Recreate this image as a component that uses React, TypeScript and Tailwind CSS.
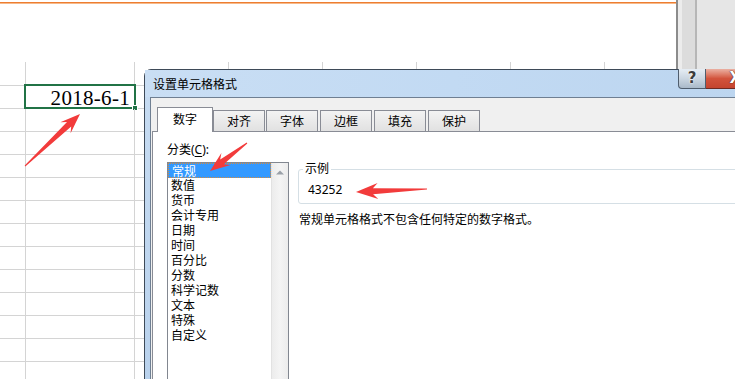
import React from "react";

const colW = [26, 109, 94, 94, 94, 94, 94, 71];
const rowCount = 14;

function arrowPts(
  x1: number, y1: number, x2: number, y2: number,
  headLen: number, headW: number, shaftW: number, tailW: number
) {
  const dx = x2 - x1, dy = y2 - y1;
  const L = Math.hypot(dx, dy);
  const ux = dx / L, uy = dy / L;
  const nx = -uy, ny = ux;
  const bx = x2 - ux * headLen, by = y2 - uy * headLen;
  const jx = bx + ux * 3, jy = by + uy * 3;
  const pts = [
    [x1 + (nx * tailW) / 2, y1 + (ny * tailW) / 2],
    [jx + (nx * shaftW) / 2, jy + (ny * shaftW) / 2],
    [bx - ux * 2 + (nx * headW) / 2, by - uy * 2 + (ny * headW) / 2],
    [x2, y2],
    [bx - ux * 2 - (nx * headW) / 2, by - uy * 2 - (ny * headW) / 2],
    [jx - (nx * shaftW) / 2, jy - (ny * shaftW) / 2],
    [x1 - (nx * tailW) / 2, y1 - (ny * tailW) / 2],
  ];
  return pts.map((p) => `${p[0].toFixed(1)},${p[1].toFixed(1)}`).join(" ");
}

const items = ["常规", "数值", "货币", "会计专用", "日期", "时间", "百分比", "分数", "科学记数", "文本", "特殊", "自定义"];

function Sheet() {
  return (
    <div className="w-[676px] h-[379px] flex flex-col bg-white">
      <div className="h-[62px] shrink-0 pt-[2px]">
        <div className="h-[1px] bg-[#ed7d31]" />
        <div className="h-[1px] bg-[#f6b98a]" />
      </div>
      {Array.from({ length: rowCount }).map((_, r) => (
        <div key={r} className={`flex shrink-0 border-b border-[#d4d4d4] ${r === 0 ? "h-[24px]" : "h-[23px]"}`}>
          {colW.map((w, c) => (
            <div
              key={c}
              style={{ width: w }}
              className={`shrink-0 h-full relative ${c < colW.length - 1 ? "border-r border-[#d4d4d4]" : ""}`}
            >
              {r === 1 && c === 1 && (
                <>
                  <div className="h-full pr-[4px] pt-[1px] text-right text-[21px] leading-[22px] tracking-[0.3px] font-['Liberation_Serif',serif] text-black">
                    2018-6-1
                  </div>
                  <div className="absolute -left-[2px] -top-[2px] w-[112px] h-[25px] border-2 border-[#217346]" />
                  <div className="absolute left-[106px] top-[19px] w-[6px] h-[6px] bg-[#217346] border border-white" />
                </>
              )}
            </div>
          ))}
        </div>
      ))}
    </div>
  );
}

function Strip() {
  return (
    <div className="w-[59px] h-[379px] flex border-l-2 border-[#8c8c8c]">
      <div className="w-[4px] bg-[#ececec]" />
      <div className="w-[15px] bg-[#dcdcdc] border-r-2 border-[#b6b6b6]" />
      <div className="flex-1 bg-[#e6e6e6]" />
    </div>
  );
}

function Tab({ label, selected, ml }: { label: string; selected?: boolean; ml?: string }) {
  if (selected) {
    return (
      <div className="relative z-10 -mb-[1px] w-[56px] h-[25px] bg-white border border-b-0 border-[#898c95] flex items-center justify-center text-[12px] leading-[14px] pb-[1px]">
        {label}
      </div>
    );
  }
  return (
    <div className={`w-[52px] h-[21px] border border-b-0 border-[#898c95] bg-gradient-to-b from-[#f3f3f3] to-[#e1e1e1] flex items-center justify-center text-[12px] leading-[14px] pt-[1px] ${ml ?? ""}`}>
      {label}
    </div>
  );
}

function Dialog() {
  return (
    <div className="absolute left-[144px] top-[69px] w-[620px] h-[330px] rounded-tl-[7px] border border-[#3e4a58] bg-gradient-to-b from-[#c7dcf2] to-[#b8d1ec] font-['Noto_Sans','Noto_Sans_CJK_SC',sans-serif] text-black">
      <div className="h-[27px] flex items-center pl-[8px] bg-gradient-to-r from-[#c9def4] via-[#c2daf3] to-[#bcd5ef]">
        <span className="text-[12px] leading-[14px] font-['Noto_Sans_CJK_SC',sans-serif]">设置单元格格式</span>
        <div className="ml-auto mr-[7px] self-start -mt-[1px] flex">
          <div className="w-[28px] h-[20px] rounded-bl-[4px] border border-t-0 border-[#4f5d6d] bg-gradient-to-b from-[#e6edf4] via-[#cbd6e1] to-[#a9b9c9] flex items-center justify-center">
            <span className="text-[15px] leading-[15px] font-bold text-[#3c3c3c] font-['DejaVu_Sans',sans-serif] [text-shadow:0_0_2px_#fff,0_0_1px_#fff]">?</span>
          </div>
          <div className="w-[50px] h-[20px] border border-t-0 border-l-0 border-[#6e2a22] bg-gradient-to-b from-[#eab0a2] via-[#d2533c] to-[#c4442f] flex items-center justify-end pr-[14px]">
            <span className="text-[15px] leading-[15px] font-bold text-white font-['DejaVu_Sans',sans-serif] [text-shadow:0_0_1px_#3a1a14,0_0_1px_#3a1a14]">X</span>
          </div>
        </div>
      </div>
      <div className="ml-[5px] h-[302px] border-l border-t border-[#6f7f92] bg-[#f0f0f0] flex flex-col">
        <div className="h-[33px] shrink-0 pl-[6px] flex items-end">
          <Tab label="数字" selected />
          <Tab label="对齐" />
          <Tab label="字体" ml="ml-[1px]" />
          <Tab label="边框" ml="ml-[2px]" />
          <Tab label="填充" ml="ml-[2px]" />
          <Tab label="保护" ml="ml-[2px]" />
        </div>
        <div className="ml-[1px] flex-1 border-t border-l border-[#898c95] bg-white flex">
          <div className="ml-[14px] pt-[10px] flex flex-col">
            <div className="text-[12px] leading-[16px] h-[16px]">
              分类(<span className="underline underline-offset-2">C</span>):
            </div>
            <div className="mt-[4px] w-[122px] h-[260px] border border-[#828790] flex">
              <div className="w-[103px] flex flex-col">
                {items.map((it, i) => (
                  <div
                    key={it}
                    className={`h-[15px] text-[12px] leading-[15px] pl-[3px] ${i === 0 ? "bg-[#3399ff] text-white border border-dotted border-[#d88a3a] pl-[2px] leading-[13px]" : ""}`}
                  >
                    {it}
                  </div>
                ))}
              </div>
              <div className="w-[17px] border-l border-[#e2e2e2] bg-gradient-to-r from-[#ececec] via-[#f4f4f4] to-[#ececec] flex justify-center pt-[7px]">
                <svg width="8" height="5" viewBox="0 0 8 5">
                  <polygon points="0,4.5 4,0.5 8,4.5" fill="#9aa0a8" />
                </svg>
              </div>
            </div>
          </div>
          <div className="ml-[9px] pt-[37px] flex flex-col">
            <div className="relative w-[460px] h-[35px] border border-[#d5dfe5] rounded-[3px] pl-[9px] pt-[12px]">
              <span className="absolute left-[4px] -top-[9px] bg-white px-[2px] text-[12px] leading-[16px]">示例</span>
              <div className="text-[12px] leading-[16px]">43252</div>
            </div>
            <div className="mt-[7px] ml-[1px] text-[12px] leading-[16px] font-['Noto_Sans_CJK_SC',sans-serif]">
              常规单元格格式不包含任何特定的数字格式。
            </div>
          </div>
        </div>
      </div>
    </div>
  );
}

export default function App() {
  return (
    <div className="relative w-[735px] h-[379px] overflow-hidden bg-white">
      <div className="flex">
        <Sheet />
        <Strip />
      </div>
      <Dialog />
      <svg className="absolute left-0 top-0 pointer-events-none" width="735" height="379">
        <polygon points={arrowPts(25, 166, 80, 114, 18, 15, 6, 1)} fill="#f23b3b" />
        <polygon points={arrowPts(247, 143, 210, 171, 18, 15, 6, 1)} fill="#f23b3b" />
        <polygon points={arrowPts(427, 189, 356, 192, 20, 16, 6, 1)} fill="#f23b3b" />
      </svg>
    </div>
  );
}
